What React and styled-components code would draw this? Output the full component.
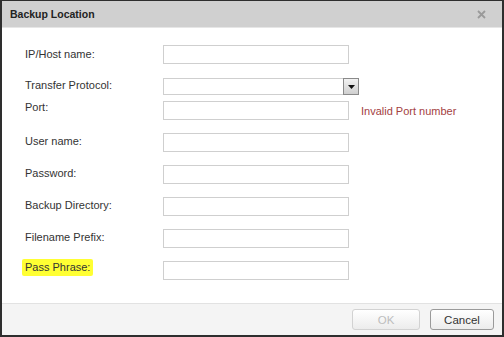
import React from "react";
import styled, { createGlobalStyle } from "styled-components";

const GlobalStyle = createGlobalStyle`
    html, body {
        margin: 0;
        padding: 0;
        background: #fff;
    }
    body {
        font-family: "Liberation Sans", Arial, sans-serif;
        font-size: 11px;
        color: #333;
    }
`

const Dialog = styled.div`
    width: 504px;
    height: 337px;
    box-sizing: border-box;
    border: 2px solid #2e2e2e;
    border-top-width: 1px;
    display: flex;
    flex-direction: column;
    background: #fff;
`

const TitleBar = styled.div`
    height: 27px;
    background: #d0d0d0;
    border-bottom: 1px solid #e6e6e6;
    display: flex;
    align-items: center;
    justify-content: space-between;
    padding: 0 16px 0 8px;
    box-sizing: border-box;
`

const Title = styled.div`
    font-weight: bold;
    font-size: 10.5px;
    color: #222;
`

const CloseBtn = styled.div`
    width: 9px;
    height: 9px;
    display: flex;
`

const Body = styled.div`
    flex: 1;
    padding: 17px 0 0 23px;
`

const Row = styled.div`
    display: flex;
    align-items: flex-start;
    margin-bottom: ${(p) => p.$after}px;
`

const LabelCell = styled.div`
    width: 138px;
    flex-shrink: 0;
`

const Label = styled.span`
    display: inline-block;
    padding-top: ${(p) => p.$top}px;
    font-size: 11px;
    color: #333;
    ${(p) => p.$mark && `
        background: #ffff33;
        margin-left: -3px;
        padding: 2px 3px 3px 3px;
        margin-top: -2px;
        border-radius: 2px;
    `}
`

const Input = styled.div`
    width: 186px;
    height: 19px;
    box-sizing: border-box;
    border: 1px solid #cfcfcf;
    background: #fff;
`

const Select = styled.div`
    display: flex;
    height: 17px;
`

const SelectBox = styled.div`
    width: 180px;
    box-sizing: border-box;
    border: 1px solid #cfcfcf;
    border-right: none;
`

const SelectArrow = styled.div`
    width: 16px;
    box-sizing: border-box;
    border: 1px solid #8a8a8a;
    background: linear-gradient(#f2f2f2, #cfcfcf);
    display: flex;
    align-items: center;
    justify-content: center;
`

const Error = styled.div`
    color: #a3413f;
    font-size: 11px;
    padding: 4px 0 0 12px;
`

const Footer = styled.div`
    height: 31px;
    background: #f4f4f4;
    border-top: 1px solid #e2e2e2;
    display: flex;
    justify-content: flex-end;
    align-items: center;
    gap: 10px;
    padding-right: 8px;
`

const Button = styled.div`
    width: ${(p) => p.$w}px;
    height: 21px;
    box-sizing: border-box;
    border: 1px solid ${(p) => (p.$disabled ? "#d2d2d2" : "#9a9a9a")};
    border-radius: 3px;
    background: linear-gradient(#ffffff, #ececec);
    color: ${(p) => (p.$disabled ? "#bdbdbd" : "#333")};
    font-size: 11.5px;
    display: flex;
    align-items: center;
    justify-content: center;
`

const fields = [
    { label: "IP/Host name:", top: 3, after: 14 },
    { label: "Transfer Protocol:", top: 1, after: 6, select: true },
    { label: "Port:", top: 0, after: 13, error: "Invalid Port number" },
    { label: "User name:", top: 2, after: 13 },
    { label: "Password:", top: 2, after: 13 },
    { label: "Backup Directory:", top: 2, after: 13 },
    { label: "Filename Prefix:", top: 2, after: 13 },
    { label: "Pass Phrase:", top: 2, after: 0, mark: true },
];

const App = () => {
    return (
        <>
            <GlobalStyle />
            <Dialog>
                <TitleBar>
                    <Title>Backup Location</Title>
                    <CloseBtn>
                        <svg width="9" height="9" viewBox="0 0 9 9">
                            <path d="M1 1L8 8M8 1L1 8" stroke="#9a9a9a" strokeWidth="1.8" />
                        </svg>
                    </CloseBtn>
                </TitleBar>
                <Body>
                    {fields.map((f) => (
                        <Row key={f.label} $after={f.after}>
                            <LabelCell>
                                <Label $top={f.top} $mark={f.mark}>{f.label}</Label>
                            </LabelCell>
                            {f.select ? (
                                <Select>
                                    <SelectBox />
                                    <SelectArrow>
                                        <svg width="7" height="4" viewBox="0 0 7 4">
                                            <path d="M0 0H7L3.5 4Z" fill="#111" />
                                        </svg>
                                    </SelectArrow>
                                </Select>
                            ) : (
                                <Input />
                            )}
                            {f.error && <Error>{f.error}</Error>}
                        </Row>
                    ))}
                </Body>
                <Footer>
                    <Button $w={68} $disabled>OK</Button>
                    <Button $w={64}>Cancel</Button>
                </Footer>
            </Dialog>
        </>
    )
}

export default App;
